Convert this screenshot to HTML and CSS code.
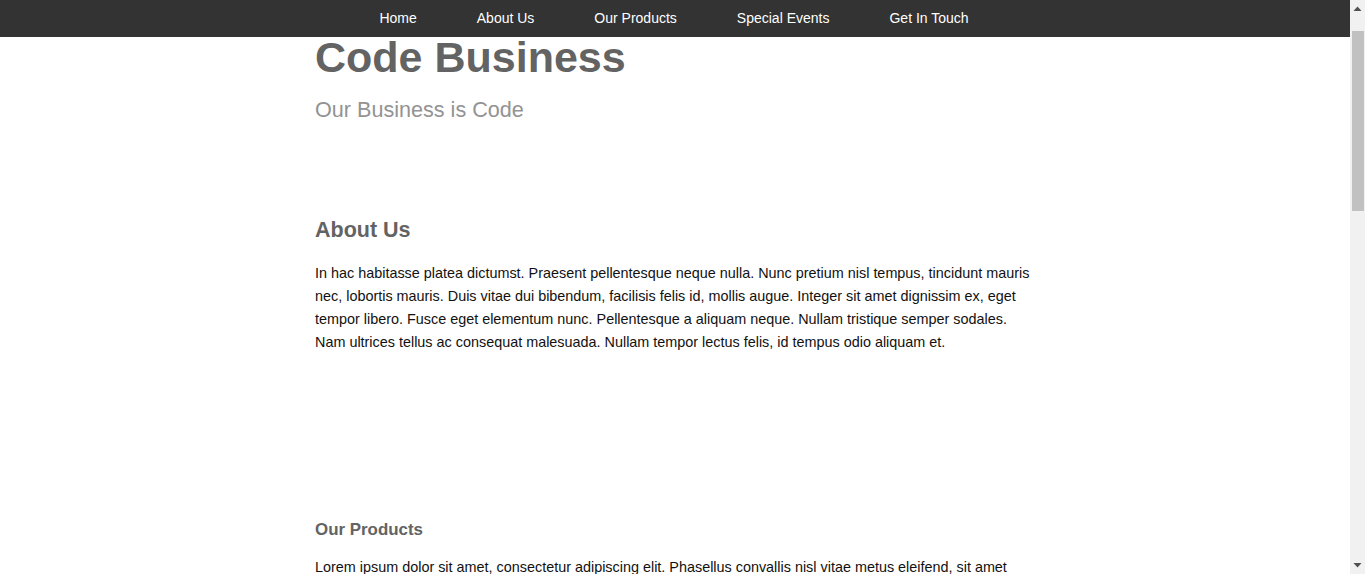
FILE: index.html
```html
<!DOCTYPE html>
<html lang="en">
<head>
<meta charset="utf-8">
<title>Code Business</title>
<link rel="stylesheet" href="styles.css">
</head>
<body>
<div class="viewport">
  <nav class="topnav">
    <a class="nav-link" href="#home">Home</a>
    <a class="nav-link" href="#about">About Us</a>
    <a class="nav-link" href="#products">Our Products</a>
    <a class="nav-link" href="#events">Special Events</a>
    <a class="nav-link" href="#contact">Get In Touch</a>
  </nav>
  <main class="page">
    <header class="masthead" id="home">
      <h1 class="site-title">Code Business</h1>
      <p class="site-tagline">Our Business is Code</p>
    </header>
    <section class="section section-about" id="about">
      <h2 class="section-title">About Us</h2>
      <p class="section-text">In hac habitasse platea dictumst. Praesent pellentesque neque nulla. Nunc pretium nisl tempus, tincidunt mauris nec, lobortis mauris. Duis vitae dui bibendum, facilisis felis id, mollis augue. Integer sit amet dignissim ex, eget tempor libero. Fusce eget elementum nunc. Pellentesque a aliquam neque. Nullam tristique semper sodales. Nam ultrices tellus ac consequat malesuada. Nullam tempor lectus felis, id tempus odio aliquam et.</p>
    </section>
    <section class="section section-products" id="products">
      <h3 class="section-subtitle">Our Products</h3>
      <p class="section-text section-text-tight">Lorem ipsum dolor sit amet, consectetur adipiscing elit. Phasellus convallis nisl vitae metus eleifend, sit amet tincidunt nibh pulvinar. Vestibulum ante ipsum primis in faucibus orci luctus et ultrices posuere cubilia curae; Mauris vel sapien vitae lorem finibus porta.</p>
    </section>
  </main>
</div>
<div class="scrollbar" aria-hidden="true">
  <svg class="scroll-arrow scroll-arrow-up" width="15" height="17" viewBox="0 0 15 17"><polygon points="3.5,11 11.5,11 7.5,6.5" fill="#505050"/></svg>
  <div class="scroll-track"><div class="scroll-thumb"></div></div>
  <svg class="scroll-arrow scroll-arrow-down" width="15" height="17" viewBox="0 0 15 17"><polygon points="3.5,6 11.5,6 7.5,10.5" fill="#505050"/></svg>
</div>
</body>
</html>
```
FILE: styles.css
```css
html, body {
  margin: 0;
  padding: 0;
  background: #ffffff;
}

body {
  font-family: "Liberation Sans", Arial, sans-serif;
  color: #111111;
  height: 574px;
  overflow: hidden;
}

.viewport {
  margin-right: 15px;
}

.topnav {
  display: flex;
  justify-content: center;
  height: 37px;
  background: #333333;
}

.nav-link {
  display: block;
  padding: 0 30px;
  font-size: 14px;
  line-height: 37px;
  color: #ffffff;
  text-decoration: none;
}

.nav-link:first-child {
  margin-left: -2px;
}

.page {
  width: 720px;
  margin: 0 auto;
}

.masthead {
  display: flex;
  flex-direction: column;
}

.site-title {
  margin: 0;
  font-size: 43px;
  line-height: 41px;
  font-weight: bold;
  color: #636363;
}

.site-tagline {
  margin: 19px 0 0;
  font-size: 21.6px;
  line-height: 25px;
  color: #939393;
}

.section-about {
  padding-top: 96px;
}

.section-title {
  margin: 0;
  font-size: 21.5px;
  line-height: 24px;
  font-weight: bold;
  color: #636363;
}

.section-text {
  margin: 20px 0 0;
  font-size: 14.4px;
  line-height: 23px;
  color: #111111;
}

.section-text-tight {
  margin-top: 16px;
}

.section-products {
  padding-top: 166px;
}

.section-subtitle {
  margin: 0;
  font-size: 16.9px;
  line-height: 20px;
  font-weight: bold;
  color: #636363;
}

/* imitation of the browser's vertical scrollbar seen in the screenshot */
.scrollbar {
  position: fixed;
  top: 0;
  right: 0;
  width: 15px;
  height: 100vh;
  display: flex;
  flex-direction: column;
  background: #f1f1f1;
}

.scroll-arrow {
  display: block;
  flex: none;
}

.scroll-track {
  flex: 1;
  padding: 14px 1px 0 2px;
}

.scroll-thumb {
  height: 180px;
  background: #c1c1c1;
}
```
